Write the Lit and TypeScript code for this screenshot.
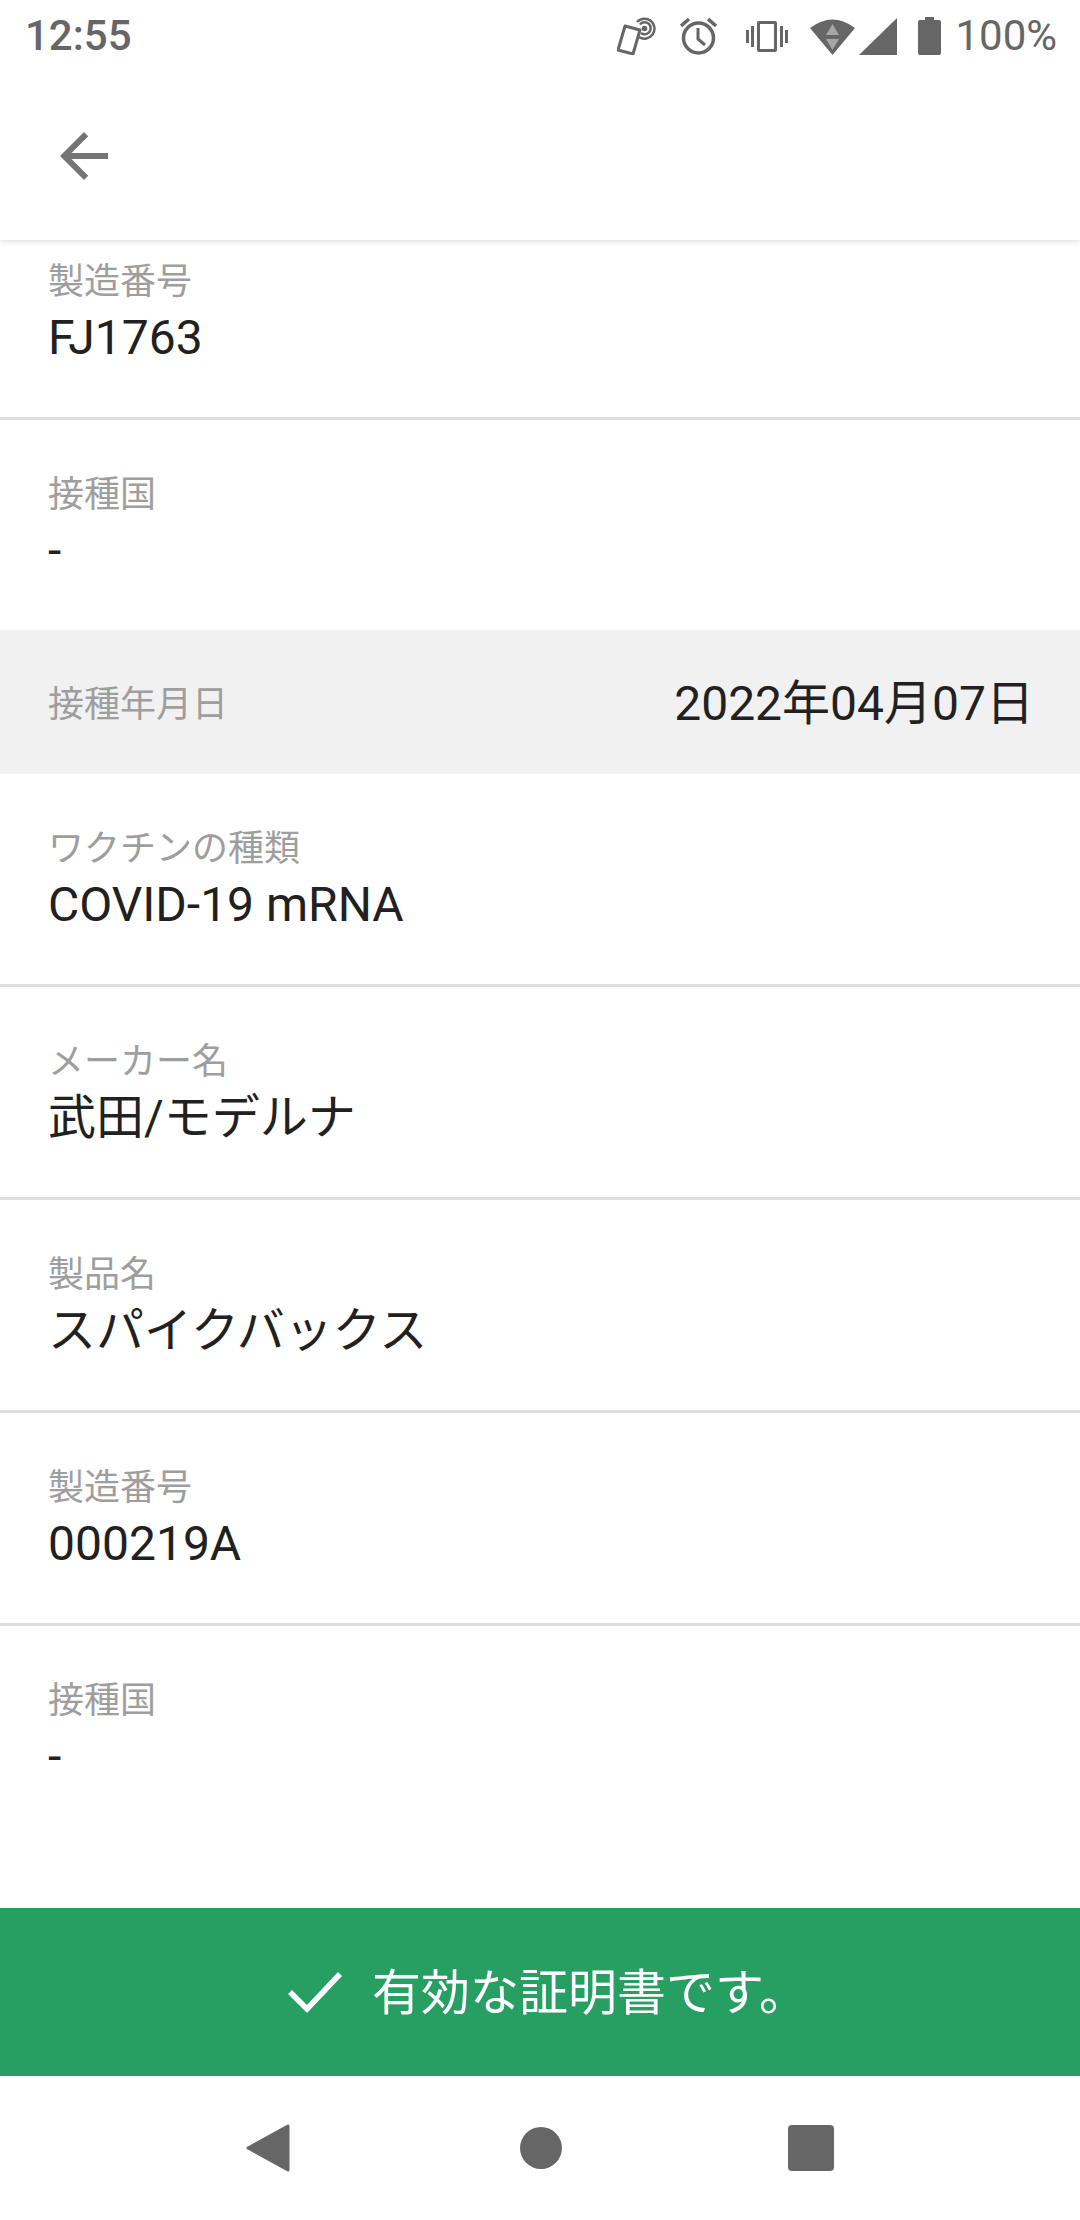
import { LitElement, html, css } from "lit";
import { customElement } from "lit/decorators.js";

interface Row { label: string; value: string; last?: boolean; }
const top: Row[] = [
  { label: "製造番号", value: "FJ1763" },
  { label: "接種国", value: "-", last: true },
];
const bottom: Row[] = [
  { label: "ワクチンの種類", value: "COVID-19 mRNA" },
  { label: "メーカー名", value: "武田/モデルナ" },
  { label: "製品名", value: "スパイクバックス" },
  { label: "製造番号", value: "000219A" },
  { label: "接種国", value: "-", last: true },
];

@customElement("app-root")
export class AppRoot extends LitElement {
  static styles = css`
    :host { display: block; width: 1080px; height: 2220px; background: #fff; font-family: Roboto, "Noto Sans CJK JP", sans-serif; overflow: hidden; }
    .page { display: flex; flex-direction: column; height: 2220px; }
    .status { height: 72px; display: flex; align-items: center; padding: 0 23px 0 25px; color: #666; font-size: 42px; font-weight: 500; flex: none; position: relative; z-index: 3; background: #fff; }
    .status svg { display: block; flex: none; }
    .time { flex: 1; line-height: 72px; }
    .pct { font-weight: 400; margin-left: 14px; line-height: 72px; }
    .ic1 { margin-right: 24px; } .ic2 { margin-right: 29px; } .ic3 { margin-right: 22px; } .ic4 { margin-right: 4px; } .ic5 { margin-right: 21px; }
    .appbar { height: 168px; flex: none; position: relative; z-index: 2; background: #fff; box-shadow: 0 1px 6px rgba(0,0,0,.16); display: flex; align-items: center; padding-left: 48px; }
    .appbar svg { display: block; }
    .list { flex: 1; overflow: hidden; min-height: 0; }
    .scroll { margin-top: -33px; }
    .row { height: 210px; box-sizing: content-box; padding: 0 48px; display: flex; flex-direction: column; justify-content: center; border-bottom: 3px solid #dedede; }
    .row.last { border-bottom: none; }
    .label { font-size: 36px; line-height: 46px; color: #9e9e9e; padding-top: 4px; }
    .value { font-size: 48px; line-height: 62px; color: #212121; padding-top: 2px; }
    .date { height: 144px; background: #f1f1f1; display: flex; align-items: center; justify-content: space-between; padding: 0 46px 0 48px; }
    .date .label { padding-top: 6px; }
    .date .value { padding-top: 3px; }
    .valid { height: 168px; flex: none; box-sizing: border-box; padding-left: 16px; background: #279f63; color: #fff; display: flex; align-items: center; justify-content: center; font-size: 49px; gap: 30px; }
    .valid svg { display: block; }
    .valid span { padding-bottom: 8px; }
    .nav { height: 144px; flex: none; display: flex; align-items: center; justify-content: center; gap: 0; position: relative; }
    .nav svg { display: block; }
    .nb1 { margin-right: 230px; } .nb2 { margin-right: 226px; }
  `;

  private row(r: Row) {
    return html`<div class="row ${r.last ? "last" : ""}">
      <div class="label">${r.label}</div>
      <div class="value">${r.value}</div>
    </div>`;
  }

  render() {
    return html`<div class="page">
      <div class="status">
        <div class="time">12:55</div>
        <svg class="ic1" width="39" height="38" viewBox="0 0 39 38" fill="none" stroke="#666">
          <path d="M8 9 L23 13 L16 37 L1 33 Z" stroke-width="3" stroke-linejoin="round"/>
          <path d="M20 5 A10 10 0 1 1 22 20" stroke-width="2.500"/>
          <path d="M23 7.500 A6 6 0 1 1 24 16" stroke-width="2.500"/>
          <circle cx="27.500" cy="11.500" r="2.800" fill="#666" stroke="none"/>
        </svg>
        <svg class="ic2" width="37" height="38" viewBox="0 0 37 38" fill="none" stroke="#666">
          <circle cx="18.500" cy="21" r="15" stroke-width="3.500"/>
          <path d="M18 11 V22 L25 28" stroke-width="3"/>
          <path d="M1 9 L9 2 M36 9 L28 2" stroke-width="3.500"/>
        </svg>
        <svg class="ic3" width="42" height="31" viewBox="0 0 42 31" fill="#666">
          <path fill-rule="evenodd" d="M13 0 H29 Q31 0 31 2 V29 Q31 31 29 31 H13 Q11 31 11 29 V2 Q11 0 13 0 Z M14 3 V28 H28 V3 Z"/>
          <rect x="0" y="9" width="3" height="13"/><rect x="5" y="5" width="3" height="21"/>
          <rect x="34" y="5" width="3" height="21"/><rect x="39" y="9" width="3" height="13"/>
        </svg>
        <svg class="ic4" width="45" height="37" viewBox="0 0 45 37">
          <path d="M0 10 Q22.500 -7 45 10 L22.500 37 Z" fill="#666"/>
          <path d="M22.500 6 L29 17 H16 Z M16 21 H29 L22.500 32 Z" fill="#a6a6a6"/>
        </svg>
        <svg class="ic5" width="38" height="37" viewBox="0 0 38 37"><path d="M38 0 V37 H0 Z" fill="#666"/></svg>
        <svg width="23" height="38" viewBox="0 0 23 38"><path d="M7 0 H16 V3 H21 Q23 3 23 5 V36 Q23 38 21 38 H2 Q0 38 0 36 V5 Q0 3 2 3 H7 Z" fill="#666"/></svg>
        <div class="pct">100%</div>
      </div>
      <div class="appbar">
        <svg width="72" height="72" viewBox="0 0 24 24"><path fill="#757575" d="M20 11H7.830l5.590-5.590L12 4l-8 8 8 8 1.410-1.410L7.830 13H20v-2z"/></svg>
      </div>
      <div class="list"><div class="scroll">
        ${top.map((r) => this.row(r))}
        <div class="date"><div class="label">接種年月日</div><div class="value">2022年04月07日</div></div>
        ${bottom.map((r) => this.row(r))}
      </div></div>
      <div class="valid">
        <svg width="54" height="42" viewBox="0 0 54 42" fill="none"><path d="M2 21 L19 38 L52 3" stroke="#fff" stroke-width="5.500"/></svg>
        <span>有効な証明書です。</span>
      </div>
      <div class="nav">
        <svg class="nb1" width="44" height="48" viewBox="0 0 44 48"><path d="M42 2 V46 L2 24 Z" fill="#666" stroke="#666" stroke-width="3" stroke-linejoin="round"/></svg>
        <svg class="nb2" width="42" height="42" viewBox="0 0 42 42"><circle cx="21" cy="21" r="21" fill="#666"/></svg>
        <svg width="46" height="46" viewBox="0 0 46 46"><rect width="46" height="46" rx="4" fill="#666"/></svg>
      </div>
    </div>`;
  }
}
